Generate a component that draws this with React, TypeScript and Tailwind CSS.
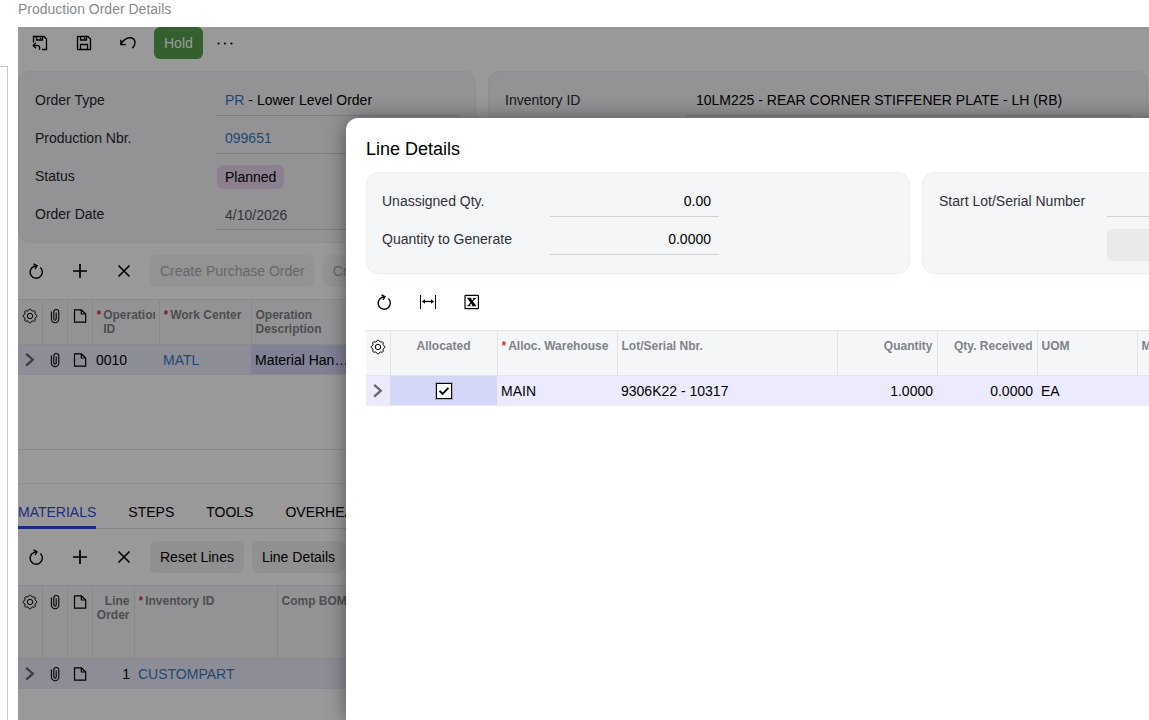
import React from "react";

type IconProps = { label: string; children: React.ReactNode };

const line = {
  fill: "none",
  stroke: "currentColor",
  strokeWidth: 1.3,
} as const;

function SaveCloseIcon() {
  return (
    <svg width="16" height="16" viewBox="0 0 16 16" {...line} aria-hidden="true">
      <path d="M1.5 7.5V1.5H12L14.5 4V14.5H10" />
      <path d="M4.5 1.8V5H10.5V1.8M8.5 2.5V4" />
      <path d="M1.2 10.5H5.5Q7.6 10.5 7.6 12.6V15M4 7.8L1.2 10.5L4 13.2" />
    </svg>
  );
}

function SaveIcon() {
  return (
    <svg width="16" height="16" viewBox="0 0 16 16" {...line} aria-hidden="true">
      <path d="M1.5 1.5H12L14.5 4V14.5H1.5Z" />
      <path d="M4.5 1.8V5H10.5V1.8M8.5 2.5V4M4.5 14.2V9.5H11.5V14.2" />
    </svg>
  );
}

function UndoIcon() {
  return (
    <svg width="16" height="16" viewBox="0 0 16 16" {...line} strokeWidth={1.4} aria-hidden="true">
      <path d="M1 9.2C3.4 5.2 6.4 2.8 9.6 2.8C12.9 2.8 15 4.9 15 7.8C15 10.2 13.9 11.8 12.3 13.3" />
      <path d="M0.9 4.8V9.6H5.8" />
    </svg>
  );
}

function MoreIcon() {
  return (
    <svg width="18" height="4" viewBox="0 0 18 4" fill="currentColor" aria-hidden="true">
      <circle cx="2.5" cy="2.5" r="1.1" />
      <circle cx="9" cy="2.5" r="1.1" />
      <circle cx="15.5" cy="2.5" r="1.1" />
    </svg>
  );
}

function RefreshIcon() {
  return (
    <svg width="16" height="16" viewBox="0 0 16 16" {...line} strokeWidth={1.4} aria-hidden="true">
      <path d="M12.4 4.6A6.1 6.1 0 1 1 5.8 3.5L8.8 2.8" />
      <path d="M5.6 0.8L9 2.8L7 6" />
    </svg>
  );
}

function PlusIcon() {
  return (
    <svg width="16" height="16" viewBox="0 0 16 16" {...line} strokeWidth={1.7} aria-hidden="true">
      <path d="M8 1V15M1 8H15" />
    </svg>
  );
}

function CloseIcon() {
  return (
    <svg width="16" height="16" viewBox="0 0 16 16" {...line} strokeWidth={1.6} aria-hidden="true">
      <path d="M2.5 2.5L13.5 13.5M13.5 2.5L2.5 13.5" />
    </svg>
  );
}

function FitIcon() {
  return (
    <svg width="18" height="16" viewBox="0 0 18 16" {...line} aria-hidden="true">
      <path d="M1.5 1V15M16.5 1V15" strokeWidth="1" />
      <path d="M3.5 7.5H14.5" />
      <path d="M3 7.5L6 5.3V9.7ZM15 7.5L12 5.3V9.7Z" fill="currentColor" stroke="none" />
    </svg>
  );
}

function ExcelIcon() {
  return (
    <svg width="16" height="16" viewBox="0 0 16 16" {...line} aria-hidden="true">
      <rect x="1" y="1.3" width="13.4" height="13.4" rx="0.5" strokeWidth="1.2" />
      <path d="M5 4.4L10.4 11.6" strokeWidth="2.8" />
      <path d="M10.8 4.4L4.6 11.6" strokeWidth="1.2" />
      <path d="M3.2 4.3H7.3M8.8 4.3H12M3.4 11.7H6.6M8.2 11.7H12.2" strokeWidth="1" />
    </svg>
  );
}

const gearPath =
  Array.from({ length: 32 }, (_, i) => {
    const r = i % 4 < 2 ? 6.8 : 5.6;
    const a = ((i - 0.5) / 32) * Math.PI * 2 - Math.PI / 2;
    return `${i === 0 ? "M" : "L"}${(8 + r * Math.cos(a)).toFixed(2)} ${(8 + r * Math.sin(a)).toFixed(2)}`;
  }).join("") + "Z";

function GearIcon() {
  return (
    <svg className="shrink-0" width="16" height="16" viewBox="0 0 16 16" {...line} strokeWidth={1} strokeLinejoin="round" aria-hidden="true">
      <path d={gearPath} />
      <circle cx="8" cy="8" r="2.7" />
    </svg>
  );
}

function ClipIcon() {
  return (
    <svg className="shrink-0" width="16" height="16" viewBox="0 0 16 16" {...line} strokeWidth={1.1} aria-hidden="true">
      <path d="M9.2 4.6V11A1.2 1.2 0 0 1 6.8 11V4A2.5 2.5 0 0 1 11.8 4V11A3.7 3.7 0 0 1 4.4 11V3.6" />
    </svg>
  );
}

function NoteIcon() {
  return (
    <svg className="shrink-0" width="16" height="16" viewBox="0 0 16 16" {...line} strokeWidth={1.2} strokeLinejoin="round" aria-hidden="true">
      <path d="M2.5 1.8H9.3L13.7 6V14.2H2.5Z" />
      <path d="M9.3 2V6H13.5" />
    </svg>
  );
}

function ChevronIcon() {
  return (
    <svg className="shrink-0 text-[#66686c]" width="16" height="16" viewBox="0 0 16 16" {...line} strokeWidth={2.3} aria-hidden="true">
      <path d="M4.2 1.8L10.8 7.7L4.2 13.6" />
    </svg>
  );
}

function IconButton({ label, children }: IconProps) {
  return (
    <button type="button" aria-label={label} className="flex h-8 w-9 shrink-0 items-center justify-center text-black">
      {children}
    </button>
  );
}

function TextButton({ children, disabled }: { children: React.ReactNode; disabled?: boolean }) {
  return (
    <button
      type="button"
      disabled={disabled}
      className="h-8 shrink-0 rounded-md bg-[#f0f0f1] px-2.5 whitespace-nowrap text-black disabled:bg-[#f6f6f6] disabled:text-[#a9abae]"
    >
      {children}
    </button>
  );
}

function Head({
  children,
  required,
  align = "text-left",
}: {
  children: React.ReactNode;
  required?: boolean;
  align?: string;
}) {
  return (
    <th scope="col" className={`border-r border-[#e3e4e6] px-1 pt-2 align-top text-xs leading-[14px] font-bold text-[#808388] ${align}`}>
      <div className="flex gap-0.5 overflow-hidden">
        {required && <span className="text-[#d8352a]">*</span>}
        <span className="min-w-0 flex-1">{children}</span>
      </div>
    </th>
  );
}

function IconHead({ label, children }: IconProps) {
  return (
    <th scope="col" aria-label={label} className="border-r border-[#e3e4e6] pt-2 align-top text-black">
      <span className="flex justify-center">{children}</span>
    </th>
  );
}

function IconCell({ label, children }: IconProps) {
  return (
    <td>
      <button type="button" aria-label={label} className="flex w-full justify-center text-black">
        {children}
      </button>
    </td>
  );
}

const headRow = "border-y border-[#e3e4e6] bg-[#f5f6f8]";
const bodyRow = "h-[30px] border-b border-[#e8e8f8] bg-[#ebebfd]";
const fieldBox = "h-8 min-w-0 border-b border-[#cfd1d4]";

function OrderField({ id, label, children }: { id: string; label: string; children: React.ReactNode }) {
  return (
    <div className="grid grid-cols-[181px_minmax(0,1fr)] items-center">
      <label htmlFor={id} className="text-[#26282b]">
        {label}
      </label>
      {children}
    </div>
  );
}

function OrderHeader() {
  return (
    <div className="mt-3 mr-px grid grid-cols-[458px_minmax(0,1fr)] gap-3">
      <section className="flex flex-col gap-1.5 rounded-xl border border-[#eceef0] bg-[#f5f6f8] px-4 py-3">
        <OrderField id="order-type" label="Order Type">
          <output id="order-type" className={`${fieldBox} flex items-center px-[9px] whitespace-pre text-black`}>
            <a href="#order-type" className="text-[#3a79bd]">PR</a> - Lower Level Order
          </output>
        </OrderField>
        <OrderField id="production-nbr" label="Production Nbr.">
          <output id="production-nbr" className={`${fieldBox} flex items-center px-[9px]`}>
            <a href="#production" className="text-[#3a79bd]">099651</a>
          </output>
        </OrderField>
        <OrderField id="status" label="Status">
          <output id="status" className="flex h-8 items-center pt-0.5">
            <span className="ml-px h-6 rounded-md bg-[#ead6f0] px-2 leading-6 text-black">Planned</span>
          </output>
        </OrderField>
        <OrderField id="order-date" label="Order Date">
          <input id="order-date" defaultValue="4/10/2026" className={`${fieldBox} bg-transparent px-[9px] pt-0.5 text-[#54575b]`} />
        </OrderField>
      </section>
      <section className="rounded-xl border border-[#eceef0] bg-[#f5f6f8] px-4 py-3">
        <OrderField id="inventory-id" label="Inventory ID">
          <input
            id="inventory-id"
            defaultValue="10LM225 - REAR CORNER STIFFENER PLATE - LH (RB)"
            className={`${fieldBox} bg-transparent px-2.5 text-black`}
          />
        </OrderField>
      </section>
    </div>
  );
}

function OperationsGrid() {
  return (
    <div className="min-h-[151px] border-b border-[#e3e4e6]">
      <table className="w-full table-fixed border-collapse">
        <colgroup>
          <col className="w-[24px]" />
          <col className="w-[25px]" />
          <col className="w-[25px]" />
          <col className="w-[67px]" />
          <col className="w-[92px]" />
          <col className="w-[104px]" />
          <col />
        </colgroup>
        <thead>
          <tr className={`h-[45px] ${headRow}`}>
            <IconHead label="Settings"><GearIcon /></IconHead>
            <IconHead label="Files"><ClipIcon /></IconHead>
            <IconHead label="Notes"><NoteIcon /></IconHead>
            <Head required>Operation ID</Head>
            <Head required>Work Center</Head>
            <Head>Operation Description</Head>
            <th />
          </tr>
        </thead>
        <tbody>
          <tr className={bodyRow}>
            <IconCell label="Select row"><ChevronIcon /></IconCell>
            <IconCell label="Files"><ClipIcon /></IconCell>
            <IconCell label="Notes"><NoteIcon /></IconCell>
            <td className="px-1">0010</td>
            <td className="px-1"><a href="#matl" className="text-[#3a79bd]">MATL</a></td>
            <td className="truncate bg-[#d6d7f8] px-1">Material Handling</td>
            <td />
          </tr>
        </tbody>
      </table>
    </div>
  );
}

function MaterialsGrid() {
  return (
    <table className="w-full table-fixed border-collapse">
      <colgroup>
        <col className="w-[24px]" />
        <col className="w-[25px]" />
        <col className="w-[25px]" />
        <col className="w-[42px]" />
        <col className="w-[143px]" />
        <col className="w-[120px]" />
        <col />
      </colgroup>
      <thead>
        <tr className={`h-[73px] ${headRow}`}>
          <IconHead label="Settings"><GearIcon /></IconHead>
          <IconHead label="Files"><ClipIcon /></IconHead>
          <IconHead label="Notes"><NoteIcon /></IconHead>
          <Head align="text-right">Line Order</Head>
          <Head required>Inventory ID</Head>
          <Head>Comp BOM ID</Head>
          <th />
        </tr>
      </thead>
      <tbody>
        <tr className={bodyRow}>
          <IconCell label="Select row"><ChevronIcon /></IconCell>
          <IconCell label="Files"><ClipIcon /></IconCell>
          <IconCell label="Notes"><NoteIcon /></IconCell>
          <td className="px-1 text-right">1</td>
          <td className="px-1"><a href="#custompart" className="text-[#3a79bd]">CUSTOMPART</a></td>
          <td />
          <td />
        </tr>
      </tbody>
    </table>
  );
}

function AllocationsGrid() {
  return (
    <table className="mt-3 w-full table-fixed border-collapse">
      <colgroup>
        <col className="w-[24px]" />
        <col className="w-[107px]" />
        <col className="w-[120px]" />
        <col className="w-[220px]" />
        <col className="w-[100px]" />
        <col className="w-[100px]" />
        <col className="w-[100px]" />
        <col />
      </colgroup>
      <thead>
        <tr className={`h-[45px] ${headRow}`}>
          <IconHead label="Settings"><GearIcon /></IconHead>
          <Head align="text-center">Allocated</Head>
          <Head required>Alloc. Warehouse</Head>
          <Head>Lot/Serial Nbr.</Head>
          <Head align="text-right">Quantity</Head>
          <Head align="text-right">Qty. Received</Head>
          <Head>UOM</Head>
          <Head>Manufacture Date</Head>
        </tr>
      </thead>
      <tbody>
        <tr className={bodyRow}>
          <IconCell label="Select row"><ChevronIcon /></IconCell>
          <td className="bg-[#d5d7f9]">
            <label className="grid place-items-center">
              <input
                type="checkbox"
                defaultChecked
                aria-label="Allocated"
                className="peer col-start-1 row-start-1 size-4 appearance-none border border-black bg-white ring-1 ring-black/20"
              />
              <svg
                className="pointer-events-none col-start-1 row-start-1 hidden peer-checked:block"
                width="16"
                height="16"
                viewBox="0 0 16 16"
                fill="none"
                stroke="black"
                strokeWidth="1.9"
                aria-hidden="true"
              >
                <path d="M3.6 7.8L6.6 10.8L12.4 4.8" />
              </svg>
            </label>
          </td>
          <td className="px-1">MAIN</td>
          <td className="px-1">9306K22 - 10317</td>
          <td className="px-1 text-right">1.0000</td>
          <td className="px-1 text-right">0.0000</td>
          <td className="px-1">EA</td>
          <td />
        </tr>
      </tbody>
    </table>
  );
}

function DialogField({ id, label, value }: { id: string; label: string; value?: string }) {
  return (
    <div className="grid grid-cols-[168px_169px] items-center">
      <label htmlFor={id} className="text-[#303236]">
        {label}
      </label>
      <input id={id} defaultValue={value} className={`${fieldBox} bg-transparent px-2 text-right text-black`} />
    </div>
  );
}

function LineDetailsDialog() {
  return (
    <div
      role="dialog"
      aria-labelledby="dialog-title"
      className="absolute top-[91px] -right-[400px] bottom-0 left-[328px] rounded-tl-xl bg-white px-5 shadow-[0_0_20px_rgba(0,0,0,0.45)]"
    >
      <h2 id="dialog-title" className="flex h-[54px] items-center pt-2 text-lg text-black">
        Line Details
      </h2>
      <div className="grid grid-cols-[544px_minmax(0,1fr)] gap-3">
        <section className="flex flex-col gap-1.5 rounded-xl border border-[#eceef0] bg-[#f5f6f8] px-[15px] pt-3 pb-[18px]">
          <DialogField id="unassigned-qty" label="Unassigned Qty." value="0.00" />
          <DialogField id="qty-generate" label="Quantity to Generate" value="0.0000" />
        </section>
        <section className="rounded-xl border border-[#eceef0] bg-[#f5f6f8] px-4 pt-3">
          <DialogField id="start-lot" label="Start Lot/Serial Number" />
          <button
            type="button"
            disabled
            aria-label="Generate"
            className="mt-3 ml-[168px] block h-8 w-24 rounded-md bg-[#e9eaeb]"
          />
        </section>
      </div>
      <div className="mt-3 flex gap-2">
        <IconButton label="Refresh"><RefreshIcon /></IconButton>
        <IconButton label="Fit to screen"><FitIcon /></IconButton>
        <IconButton label="Export to Excel"><ExcelIcon /></IconButton>
      </div>
      <AllocationsGrid />
    </div>
  );
}

const tabs = ["MATERIALS", "STEPS", "TOOLS", "OVERHEAD"];

export default function App() {
  return (
    <div className="flex h-screen overflow-hidden bg-white font-['Liberation_Sans',Arial,sans-serif] text-sm text-black">
      <div className="mt-[66px] mr-2.5 w-2 shrink-0 border-t border-r border-[#c8c8c8]" />
      <div className="flex min-w-0 flex-1 flex-col">
        <h1 className="h-[27px] shrink-0 leading-[18px] text-[#888a8d]">Production Order Details</h1>
        <main className="relative min-h-0 flex-1 overflow-hidden">
          <div className="flex gap-2 pl-1">
            <IconButton label="Save and close"><SaveCloseIcon /></IconButton>
            <IconButton label="Save"><SaveIcon /></IconButton>
            <IconButton label="Undo"><UndoIcon /></IconButton>
            <button type="button" className="h-8 rounded-md bg-[#55a04e] px-2.5 text-white">Hold</button>
            <button type="button" aria-label="More actions" className="flex h-8 w-7 items-center justify-center">
              <MoreIcon />
            </button>
          </div>
          <OrderHeader />
          <div className="my-3 flex gap-2">
            <IconButton label="Refresh"><RefreshIcon /></IconButton>
            <IconButton label="Add row"><PlusIcon /></IconButton>
            <IconButton label="Delete row"><CloseIcon /></IconButton>
            <TextButton disabled>Create Purchase Order</TextButton>
            <TextButton disabled>Create Production Order</TextButton>
          </div>
          <OperationsGrid />
          <div className="h-[34px] border-b border-[#eceef0]" />
          <div role="tablist" className="flex h-[45px] gap-8 border-b border-[#d8dadc]">
            {tabs.map((tab, i) => (
              <button
                key={tab}
                type="button"
                role="tab"
                aria-selected={i === 0}
                className="-mb-px border-b-3 border-transparent pt-3.5 aria-selected:border-[#3847d8] aria-selected:text-[#3847d8]"
              >
                {tab}
              </button>
            ))}
          </div>
          <div className="my-3 flex gap-2">
            <IconButton label="Refresh"><RefreshIcon /></IconButton>
            <IconButton label="Add row"><PlusIcon /></IconButton>
            <IconButton label="Delete row"><CloseIcon /></IconButton>
            <TextButton>Reset Lines</TextButton>
            <TextButton>Line Details</TextButton>
          </div>
          <MaterialsGrid />
          <div className="absolute inset-0 bg-black/40" />
          <LineDetailsDialog />
        </main>
      </div>
    </div>
  );
}
